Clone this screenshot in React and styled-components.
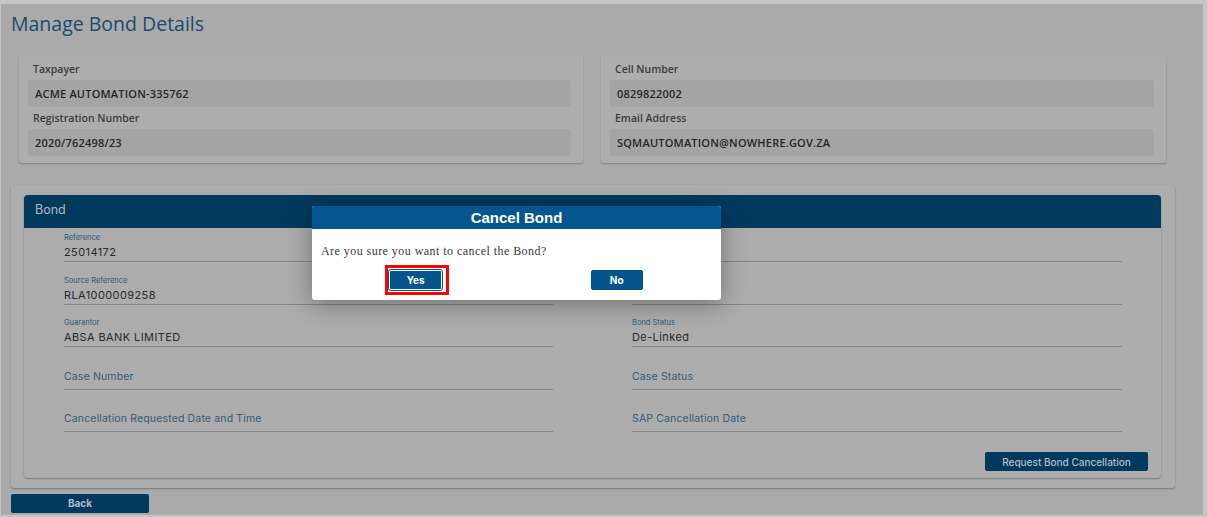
import styled, { createGlobalStyle } from 'styled-components';

const GlobalStyle = createGlobalStyle`
  html, body {
    margin: 0;
    padding: 0;
    background: #c6c6c6;
  }
  * {
    box-sizing: border-box;
  }
`;

const Frame = styled.div`
  width: 1207px;
  height: 517px;
  padding: 4px 4px 2px 1px;
`;

const Page = styled.div`
  position: relative;
  height: 100%;
  background: #aaaaaa;
  padding: 0 0 0 10px;
  overflow: hidden;
`;

const Title = styled.h1`
  margin: 0;
  padding-top: 9px;
  height: 52px;
  font-family: 'Open Sans', sans-serif;
  font-weight: 400;
  font-size: 19.5px;
  line-height: 22px;
  color: #1b4a6c;
`;

const TopRow = styled.div`
  display: grid;
  grid-template-columns: 564px 565px;
  gap: 18px;
  padding-left: 8px;
`;

const InfoCard = styled.div`
  background: #adadad;
  border-radius: 3px;
  box-shadow: 0 1px 2px rgba(0, 0, 0, 0.25);
  padding: 6px 12px 8px 9px;
  height: 107px;
`;

const InfoLabel = styled.div`
  font-family: 'Open Sans', sans-serif;
  font-weight: 600;
  font-size: 10.5px;
  line-height: 14px;
  color: #3c3c3c;
  padding-left: 5px;
  margin-bottom: 4px;
`;

const InfoValue = styled.div`
  background: #a4a4a4;
  border-radius: 3px;
  height: 27px;
  display: flex;
  align-items: center;
  padding-left: 7px;
  margin-bottom: 4px;
  font-family: 'Open Sans', sans-serif;
  font-weight: 600;
  font-size: 11px;
  letter-spacing: 0.2px;
  color: #262626;
`;

const BondPanel = styled.div`
  margin-top: 22px;
  width: 1164px;
  background: #adadad;
  border-radius: 3px;
  box-shadow: 0 1px 2px rgba(0, 0, 0, 0.3);
  padding: 10px 14px 10px 13px;
`;

const BondCard = styled.div`
  background: #acacac;
  border-radius: 4px;
  box-shadow: 0 1px 2px rgba(0, 0, 0, 0.3);
  padding-bottom: 7px;
`;

const BondHeader = styled.div`
  height: 33px;
  background: #023a5e;
  border-radius: 4px 4px 0 0;
  padding: 0 0 4px 11px;
  display: flex;
  align-items: center;
  font-family: 'Inter', sans-serif;
  font-size: 12.5px;
  color: #aeb9c3;
`;

const FieldGrid = styled.div`
  display: grid;
  grid-template-columns: 489px 490px;
  column-gap: 79px;
  row-gap: 9.5px;
  padding: 1px 39px 0 40px;
`;

const Field = styled.div`
  height: 33px;
  border-bottom: 1px solid #858585;
  padding-top: 4px;
`;

const FieldLabel = styled.div`
  font-family: 'Inter', sans-serif;
  font-size: 7.5px;
  line-height: 10px;
  height: 10px;
  color: #2c5878;
`;

const FieldValue = styled.div`
  margin-top: ${p => (p.$placeholder ? '-1px' : '3px')};
  font-family: 'Inter', sans-serif;
  font-size: ${p => (p.$placeholder ? '10.5px' : '11px')};
  letter-spacing: ${p => (p.$placeholder ? '0.15px' : '0.4px')};
  line-height: 13px;
  color: ${p => (p.$placeholder ? '#355b7a' : '#2a2a2a')};
`;

const Actions = styled.div`
  display: flex;
  justify-content: flex-end;
  padding: 20px 13px 0 0;
`;

const DarkButton = styled.button`
  height: 19px;
  width: ${p => p.$width}px;
  border: none;
  border-radius: 2px;
  background: #02395e;
  color: #b3bdc7;
  font-family: 'Inter', sans-serif;
  font-weight: ${p => (p.$bold ? 700 : 500)};
  font-size: 10px;
  padding: 0;
`;

const BackRow = styled.div`
  margin-top: 5px;
`;

const Modal = styled.div`
  position: absolute;
  left: 311px;
  top: 202px;
  width: 409px;
  height: 94px;
  background: #ffffff;
  border-radius: 3px;
  box-shadow: 0 4px 24px rgba(0, 0, 0, 0.35);
  overflow: hidden;
`;

const ModalHeader = styled.div`
  height: 23px;
  background: #03568f;
  display: flex;
  align-items: center;
  justify-content: center;
  font-family: 'Liberation Sans', Arial, sans-serif;
  font-weight: 700;
  font-size: 15px;
  color: #ffffff;
`;

const ModalText = styled.p`
  margin: 0;
  padding: 15px 0 0 9px;
  height: 36px;
  font-family: 'Liberation Serif', 'Times New Roman', serif;
  font-size: 12px;
  line-height: 14px;
  letter-spacing: 0.45px;
  color: #3a3a3a;
`;

const ModalButtons = styled.div`
  display: grid;
  grid-template-columns: 1fr 1fr;
  align-items: center;
  justify-items: center;
`;

const Highlight = styled.span`
  display: inline-flex;
  border: 3px solid #ff0000;
  padding: 2px 4px 2px 1px;
  margin-left: 6px;
`;

const ModalButton = styled.button`
  width: ${p => p.$width}px;
  height: 20px;
  border: 1px solid ${p => (p.$outlined ? '#ffffff' : '#05548a')};
  outline: ${p => (p.$outlined ? '1px solid #05548a' : 'none')};
  border-radius: 2px;
  background: #05548a;
  color: #ffffff;
  font-family: 'Inter', sans-serif;
  font-weight: 700;
  font-size: 10px;
  padding: 0;
  margin-right: ${p => (p.$shift ? `${p.$shift}px` : '0')};
`;

const topFields = [
  [
    ['Taxpayer', 'ACME AUTOMATION-335762'],
    ['Registration Number', '2020/762498/23'],
  ],
  [
    ['Cell Number', '0829822002'],
    ['Email Address', 'SQMAUTOMATION@NOWHERE.GOV.ZA'],
  ],
];

const bondFields = [
  { label: 'Reference', value: '25014172' },
  { label: '', value: '' },
  { label: 'Source Reference', value: 'RLA1000009258' },
  { label: '', value: '' },
  { label: 'Guarantor', value: 'ABSA BANK LIMITED' },
  { label: 'Bond Status', value: 'De-Linked' },
  { placeholder: 'Case Number' },
  { placeholder: 'Case Status' },
  { placeholder: 'Cancellation Requested Date and Time' },
  { placeholder: 'SAP Cancellation Date' },
];

export default function App() {
  return (
    <>
      <GlobalStyle />
      <Frame>
        <Page>
          <Title>Manage Bond Details</Title>
          <TopRow>
            {topFields.map((card, i) => (
              <InfoCard key={i}>
                {card.map(([label, value]) => (
                  <div key={label}>
                    <InfoLabel>{label}</InfoLabel>
                    <InfoValue>{value}</InfoValue>
                  </div>
                ))}
              </InfoCard>
            ))}
          </TopRow>

          <BondPanel>
            <BondCard>
              <BondHeader>Bond</BondHeader>
              <FieldGrid>
                {bondFields.map((f, i) => (
                  <Field key={i}>
                    <FieldLabel>{f.label}</FieldLabel>
                    {f.placeholder ? (
                      <FieldValue $placeholder>{f.placeholder}</FieldValue>
                    ) : (
                      <FieldValue>{f.value}</FieldValue>
                    )}
                  </Field>
                ))}
              </FieldGrid>
              <Actions>
                <DarkButton $width={163}>Request Bond Cancellation</DarkButton>
              </Actions>
            </BondCard>
          </BondPanel>

          <BackRow>
            <DarkButton $width={138} $bold>
              Back
            </DarkButton>
          </BackRow>

          <Modal>
            <ModalHeader>Cancel Bond</ModalHeader>
            <ModalText>Are you sure you want to cancel the Bond?</ModalText>
            <ModalButtons>
              <Highlight>
                <ModalButton $width={53} $outlined>
                  Yes
                </ModalButton>
              </Highlight>
              <ModalButton $width={52} $shift={4}>
                No
              </ModalButton>
            </ModalButtons>
          </Modal>
        </Page>
      </Frame>
    </>
  );
}
